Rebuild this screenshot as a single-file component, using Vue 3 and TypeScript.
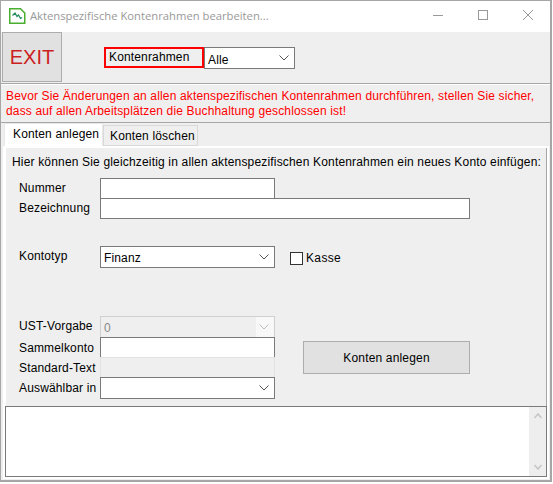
<script setup lang="ts">
const title = 'Aktenspezifische Kontenrahmen bearbeiten...'
</script>

<template>
  <div class="window">
    <header class="titlebar">
      <svg class="appicon" width="17" height="16" viewBox="0 0 17 16">
        <path d="M.75 .75H11.5L15.75 5V15.25H.75Z" fill="#fff" stroke="#4aae2e" stroke-width="1.5" />
        <path d="M3.5 7.5L6 5L8 8.5L9.5 7L11.5 10.5L13 9.5" fill="none" stroke="#1f8a5a" stroke-width="1.2" />
      </svg>
      <span class="title">{{ title }}</span>
      <div class="winbtns">
        <svg width="10" height="10" viewBox="0 0 10 10"><path d="M0 5.5H10" stroke="#999" /></svg>
        <svg width="10" height="10" viewBox="0 0 10 10"><rect x=".5" y=".5" width="9" height="9" fill="none" stroke="#999" /></svg>
        <svg width="10" height="10" viewBox="0 0 10 10"><path d="M0 0L10 10M10 0L0 10" stroke="#999" /></svg>
      </div>
    </header>

    <section class="toolbar">
      <button class="exit">EXIT</button>
      <div class="filter">
        <span class="redlabel">Kontenrahmen</span>
        <div class="select alle">
          <span>Alle</span>
          <svg class="chev" width="10" height="6" viewBox="0 0 10 6"><path d="M.5 .5L5 5L9.5 .5" fill="none" stroke="#555" /></svg>
        </div>
      </div>
    </section>

    <p class="warning">Bevor Sie Änderungen an allen aktenspezifischen Kontenrahmen durchführen, stellen Sie sicher,<br />dass auf allen Arbeitsplätzen die Buchhaltung geschlossen ist!</p>

    <nav class="tabs">
      <div class="tab active">Konten anlegen</div>
      <div class="tab">Konten löschen</div>
    </nav>

    <div class="tabbody">
      <main class="panel">
        <p class="intro">Hier können Sie gleichzeitig in allen aktenspezifischen Kontenrahmen ein neues Konto einfügen:</p>

        <div class="row first">
          <label class="up">Nummer</label>
          <div class="field short"></div>
        </div>
        <div class="row">
          <label class="up">Bezeichnung</label>
          <div class="field long"></div>
        </div>

        <div class="row kontotyp">
          <label class="up">Kontotyp</label>
          <div class="select short tall">
            <span>Finanz</span>
            <svg class="chev" width="10" height="6" viewBox="0 0 10 6"><path d="M.5 .5L5 5L9.5 .5" fill="none" stroke="#555" /></svg>
          </div>
          <div class="check"><i class="box"></i><span>Kasse</span></div>
        </div>

        <div class="lower">
          <div class="lowerform">
            <div class="row">
              <label class="up">UST-Vorgabe</label>
              <div class="select short tall disabled">
                <span>0</span>
                <svg class="chev" width="10" height="6" viewBox="0 0 10 6"><path d="M.5 .5L5 5L9.5 .5" fill="none" stroke="#bbb" /></svg>
              </div>
            </div>
            <div class="row">
              <label>Sammelkonto</label>
              <div class="field short"></div>
            </div>
            <div class="row">
              <label>Standard-Text</label>
              <div class="field short readonly"></div>
            </div>
            <div class="row">
              <label>Auswählbar in</label>
              <div class="select short tall">
                <svg class="chev" width="10" height="6" viewBox="0 0 10 6"><path d="M.5 .5L5 5L9.5 .5" fill="none" stroke="#555" /></svg>
              </div>
            </div>
          </div>
          <button class="create">Konten anlegen</button>
        </div>
      </main>

      <div class="log">
        <div class="scrollbar">
          <svg width="8" height="6" viewBox="0 0 8 6"><path d="M.5 5L4 1L7.5 5" fill="none" stroke="#c4c4c4" stroke-width="1.5" /></svg>
          <svg width="8" height="6" viewBox="0 0 8 6"><path d="M.5 1L4 5L7.5 1" fill="none" stroke="#c4c4c4" stroke-width="1.5" /></svg>
        </div>
      </div>
    </div>
  </div>
</template>

<style>
html, body { margin: 0; background: #fff; }
</style>

<style scoped>
.window {
  box-sizing: border-box;
  width: 552px;
  height: 482px;
  display: flex;
  flex-direction: column;
  background: #efefef;
  border: 1px solid #a6a6a6;
  border-width: 1px 2px 2px 1px;
  font: 12px "Liberation Sans", Arial, sans-serif;
  letter-spacing: .15px;
  color: #000;
  overflow: hidden;
}
.titlebar {
  height: 31px;
  flex: none;
  display: flex;
  align-items: center;
  background: #fff;
  padding-left: 8px;
}
.appicon { margin-right: 4px; margin-top: -2px; }
.title { color: #999; font: 11.25px "Open Sans", sans-serif; letter-spacing: 0; margin-top: -3px; }
.winbtns {
  margin-left: auto;
  display: flex;
  gap: 35px;
  padding-right: 17px;
  margin-top: -3px;
}
.winbtns svg { display: block; }
.toolbar {
  height: 52px;
  flex: none;
  box-sizing: border-box;
  display: flex;
  padding-left: 1px;
  border-bottom: 1px solid #a6a6a6;
}
.exit {
  width: 60px;
  height: 50px;
  box-sizing: border-box;
  padding: 0;
  background: #e1e1e1;
  border: 1px solid #adadad;
  color: #cc1f1f;
  font: 20px "Liberation Sans", Arial, sans-serif;
}
.filter { display: flex; align-items: flex-start; margin: 15px 0 0 42px; }
.redlabel {
  box-sizing: border-box;
  width: 100px;
  height: 21px;
  border: 2px solid #f00;
  padding: 1px 0 0 3px;
  white-space: nowrap;
}
.select, .field {
  box-sizing: border-box;
  position: relative;
  background: #fff;
  border: 1px solid #7a7a7a;
  height: 21px;
}
.select { display: flex; align-items: center; padding: 2px 0 0 3px; }
.alle { width: 91px; height: 22px; padding-top: 3px; }
.chev { position: absolute; right: 5px; top: 50%; margin-top: -3px; z-index: 1; }
.warning {
  margin: 0;
  flex: none;
  height: 39px;
  box-sizing: border-box;
  padding: 4px 0 0 5px;
  line-height: 15px;
  color: #f00;
  letter-spacing: .15px;
  border-bottom: 1px solid #a6a6a6;
  border-top: 1px solid #fff;
}
.tabs { display: flex; height: 23px; flex: none; padding-left: 3px; box-sizing: border-box; align-items: flex-end; }
.tab {
  box-sizing: border-box;
  width: 95px;
  height: 21px;
  padding: 3px 0 0 6px;
  border: 1px solid #d9d9d9;
  white-space: nowrap;
}
.tab.active {
  width: 99px;
  height: 23px;
  padding: 3px 0 0 8px;
  background: #fff;
  border-color: #e8e8e8;
  border-bottom: none;
}
.tabbody {
  flex: none;
  box-sizing: border-box;
  margin: 0 1px 0 2px;
  background: #fff;
  padding: 2px;
}
.panel {
  box-sizing: border-box;
  height: 258px;
  margin-left: 1px;
  background: #efefef;
  border-right: 1px solid #a6a6a6;
  padding-left: 6px;
}
.intro { margin: 0; padding: 7px 0 8px; line-height: 15px; white-space: nowrap; letter-spacing: .17px; }
.row { display: flex; align-items: center; margin-top: -1px; }
.row.first { margin-top: 0; }
.row label { width: 81px; margin-left: 7px; flex: none; white-space: nowrap; }
.row label.up { margin-bottom: 2px; }
.short { width: 175px; }
.long { width: 370px; }
.tall { height: 22px; }
.kontotyp { margin-top: 27px; }
.check { display: flex; align-items: center; margin-left: 15px; padding-top: 2px; letter-spacing: .35px; }
.box { box-sizing: border-box; width: 13px; height: 13px; border: 1px solid #333; background: #fff; margin-right: 3px; }
.lower { display: flex; margin-top: 49px; }
.lowerform { flex: none; }
.disabled { background: #efefef; border-color: #cfcfcf; color: #888; }
.disabled::after {
  content: "";
  position: absolute;
  right: 0;
  top: 0;
  bottom: 0;
  width: 18px;
  background: #f8f8f8;
}
.readonly { background: #efefef; border-color: #e2e2e2; }
.create {
  box-sizing: border-box;
  width: 167px;
  height: 33px;
  margin: 24px 0 0 28px;
  background: #e1e1e1;
  border: 1px solid #adadad;
  color: #000;
  padding: 0;
  font: 12px "Liberation Sans", Arial, sans-serif;
  letter-spacing: .17px;
}
.log {
  box-sizing: border-box;
  height: 71px;
  background: #fff;
  border: 1px solid #7a7a7a;
  display: flex;
  justify-content: flex-end;
}
.scrollbar {
  width: 17px;
  background: #eee;
  display: flex;
  flex-direction: column;
  align-items: center;
  justify-content: space-between;
  padding: 6px 0;
  box-sizing: border-box;
}
.scrollbar svg { display: block; }
</style>
